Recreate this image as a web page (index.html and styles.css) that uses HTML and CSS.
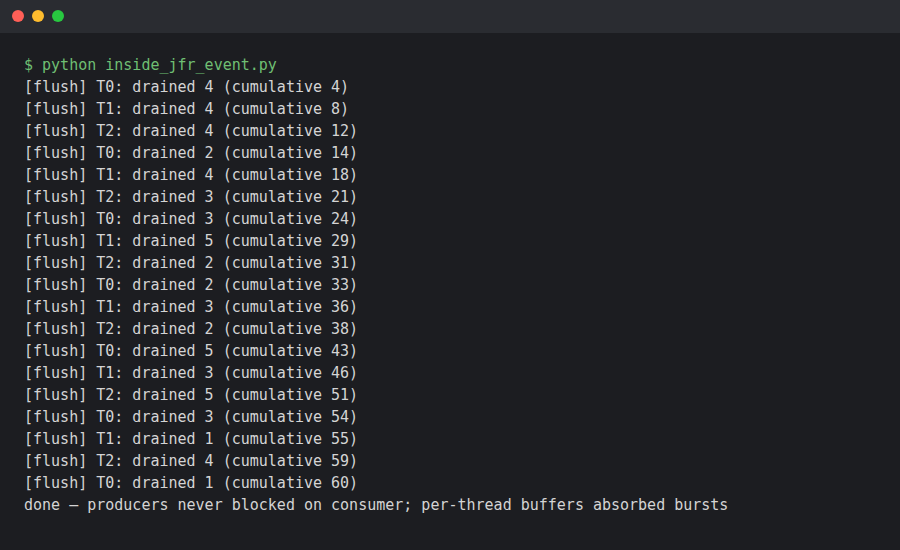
FILE: index.html
```html
<!DOCTYPE html>
<html>
<head>
<meta charset="utf-8">
<link rel="stylesheet" href="styles.css">
</head>
<body>
<div class="window">
  <div class="titlebar">
    <span class="dot red"></span>
    <span class="dot yellow"></span>
    <span class="dot green"></span>
  </div>
  <pre class="term"><span class="prompt">$ python inside_jfr_event.py</span>
[flush] T0: drained 4 (cumulative 4)
[flush] T1: drained 4 (cumulative 8)
[flush] T2: drained 4 (cumulative 12)
[flush] T0: drained 2 (cumulative 14)
[flush] T1: drained 4 (cumulative 18)
[flush] T2: drained 3 (cumulative 21)
[flush] T0: drained 3 (cumulative 24)
[flush] T1: drained 5 (cumulative 29)
[flush] T2: drained 2 (cumulative 31)
[flush] T0: drained 2 (cumulative 33)
[flush] T1: drained 3 (cumulative 36)
[flush] T2: drained 2 (cumulative 38)
[flush] T0: drained 5 (cumulative 43)
[flush] T1: drained 3 (cumulative 46)
[flush] T2: drained 5 (cumulative 51)
[flush] T0: drained 3 (cumulative 54)
[flush] T1: drained 1 (cumulative 55)
[flush] T2: drained 4 (cumulative 59)
[flush] T0: drained 1 (cumulative 60)
done — producers never blocked on consumer; per-thread buffers absorbed bursts</pre>
</div>
</body>
</html>
```

FILE: styles.css
```css
html, body {
  margin: 0;
  padding: 0;
  background: #1c1d21;
}
.window {
  width: 900px;
  height: 550px;
  background: #1c1d21;
  display: flex;
  flex-direction: column;
  overflow: hidden;
}
.titlebar {
  height: 33px;
  flex: 0 0 33px;
  background: #2a2c31;
  display: flex;
  align-items: center;
  gap: 8px;
  padding: 0 0 1px 12px;
  box-sizing: border-box;
}
.dot {
  width: 12px;
  height: 12px;
  border-radius: 50%;
  display: block;
}
.red { background: #ff5f57; }
.yellow { background: #febc2e; }
.green { background: #28c840; }
.term {
  margin: 0;
  padding: 21px 24px 0 24px;
  font-family: "DejaVu Sans Mono", monospace;
  font-size: 15px;
  line-height: 22px;
  color: #d4d4d4;
  white-space: pre;
}
.prompt {
  color: #6fbf73;
}
```
